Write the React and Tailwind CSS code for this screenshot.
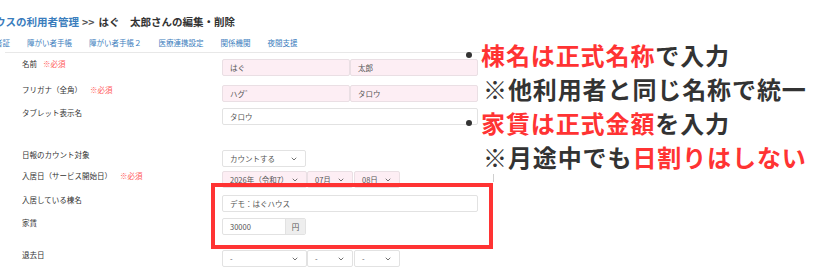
import { ChevronDown } from 'lucide-react';

const font = { fontFamily: '"Noto Sans CJK JP", "Noto Sans", sans-serif' };

const tabs = ['受給者証', '障がい者手帳', '障がい者手帳２', '医療連携設定', '関係機関', '夜間支援'];

function Field({ children, pink, className = '' }) {
  return (
    <div
      className={`flex h-[17px] items-center rounded-[2px] border px-[7px] text-[7.5px] text-[#555] ${
        pink ? 'border-[#eadfe4] bg-[#fdeef4]' : 'border-[#e2e2e2] bg-white'
      } ${className}`}
    >
      {children}
    </div>
  );
}

function Select({ value, pink, className = '' }) {
  return (
    <Field pink={pink} className={`justify-between ${className}`}>
      <span>{value}</span>
      <ChevronDown size={8} strokeWidth={2.5} className="text-[#555]" />
    </Field>
  );
}

function Row({ label, required, reqGap = 'ml-[6px]', mt, children }) {
  return (
    <div className={`flex ${mt}`}>
      <div className="w-[222px] pl-[22px] text-[7.5px] leading-[10px] text-[#333]">
        {label}
        {required && <span className={`${reqGap} text-[#ff5a5a]`}>※必須</span>}
      </div>
      <div className="flex">{children}</div>
    </div>
  );
}

export default function App() {
  return (
    <div className="relative h-[269px] w-[834px] overflow-hidden bg-white" style={font}>
      <div className="flex w-[480px] flex-col">
        <div className="ml-[-5px] mt-[15px] flex h-[14px] items-center whitespace-nowrap text-[10.5px] font-bold">
          <span className="text-[#3a7dbd]">ウスの利用者管理</span>
          <span className="ml-[3px] text-[#555]">&gt;&gt;</span>
          <span className="ml-[4px] text-[#333]">はぐ　太郎さんの編集・削除</span>
        </div>
        <div className="ml-[-20px] mt-[9px] flex h-[10px] items-center gap-[17px] whitespace-nowrap text-[7.5px] text-[#3a7dbd]">
          {tabs.map((t) => (
            <span key={t}>{t}</span>
          ))}
        </div>
        <div className="ml-[5px] mt-[4px] h-px bg-[#e8e8e8]" />

        <Row label="名前" required mt="mt-[6px]">
          <Field pink className="w-[128px]">はぐ</Field>
          <Field pink className="w-[128px]">太郎</Field>
        </Row>
        <Row label="フリガナ（全角）" required reqGap="ml-[8px]" mt="mt-[9px]">
          <Field pink className="w-[128px]">ハグ゛</Field>
          <Field pink className="w-[128px]">タロウ</Field>
        </Row>
        <Row label="タブレット表示名" mt="mt-[6px]">
          <Field className="w-[256px]">タロウ</Field>
        </Row>
        <Row label="日報のカウント対象" mt="mt-[25px]">
          <Select value="カウントする" className="w-[84px]" />
        </Row>
        <Row label="入居日（サービス開始日）" required reqGap="ml-[8px]" mt="mt-[4px]">
          <Select pink value="2026年（令和7）" className="w-[85px]" />
          <Select pink value="07月" className="w-[46px]" />
          <Select pink value="08日" className="ml-[1px] w-[46px]" />
        </Row>
        <Row label="入居している棟名" mt="mt-[7px]">
          <Field className="w-[256px]">デモ：はぐハウス</Field>
        </Row>
        <Row label="家賃" mt="mt-[6px]">
          <div className="flex h-[17px] w-[84px] overflow-hidden rounded-[2px] border border-[#e2e2e2] text-[7.5px] text-[#555]">
            <span className="flex flex-1 items-center px-[7px]">30000</span>
            <span className="flex w-[20px] items-center justify-center border-l border-[#e2e2e2] bg-[#eeeeee]">円</span>
          </div>
        </Row>
        <Row label="退去日" mt="mt-[15px]">
          <Select value="-" className="w-[85px]" />
          <Select value="-" className="w-[46px]" />
          <Select value="-" className="ml-[1px] w-[46px]" />
        </Row>
      </div>

      <div className="absolute left-[493px] top-[98px] h-[84px] w-px bg-[#cfcfcf]" />

      <div className="absolute left-[211px] top-[183px] h-[66px] w-[282px] border-[4px] border-[#ff3333]" />

      <div className="absolute left-[466px] top-[38px] flex flex-col text-[24px] font-bold leading-[34px] tracking-[0.9px] text-[#333]">
        <div className="flex items-center">
          <span className="mr-[9px] h-[6px] w-[6px] rounded-full bg-[#333]" />
          <span className="bg-white">
            <span className="text-[#ff3333]">棟名は正式名称</span>で入力
          </span>
        </div>
        <div className="pl-[17px]">
          <span className="bg-white">※他利用者と同じ名称で統一</span>
        </div>
        <div className="flex items-center">
          <span className="mr-[9px] h-[6px] w-[6px] rounded-full bg-[#333]" />
          <span className="bg-white">
            <span className="text-[#ff3333]">家賃は正式金額</span>を入力
          </span>
        </div>
        <div className="pl-[17px]">
          <span className="bg-white">
            ※月途中でも<span className="text-[#ff3333]">日割りはしない</span>
          </span>
        </div>
      </div>
    </div>
  );
}
